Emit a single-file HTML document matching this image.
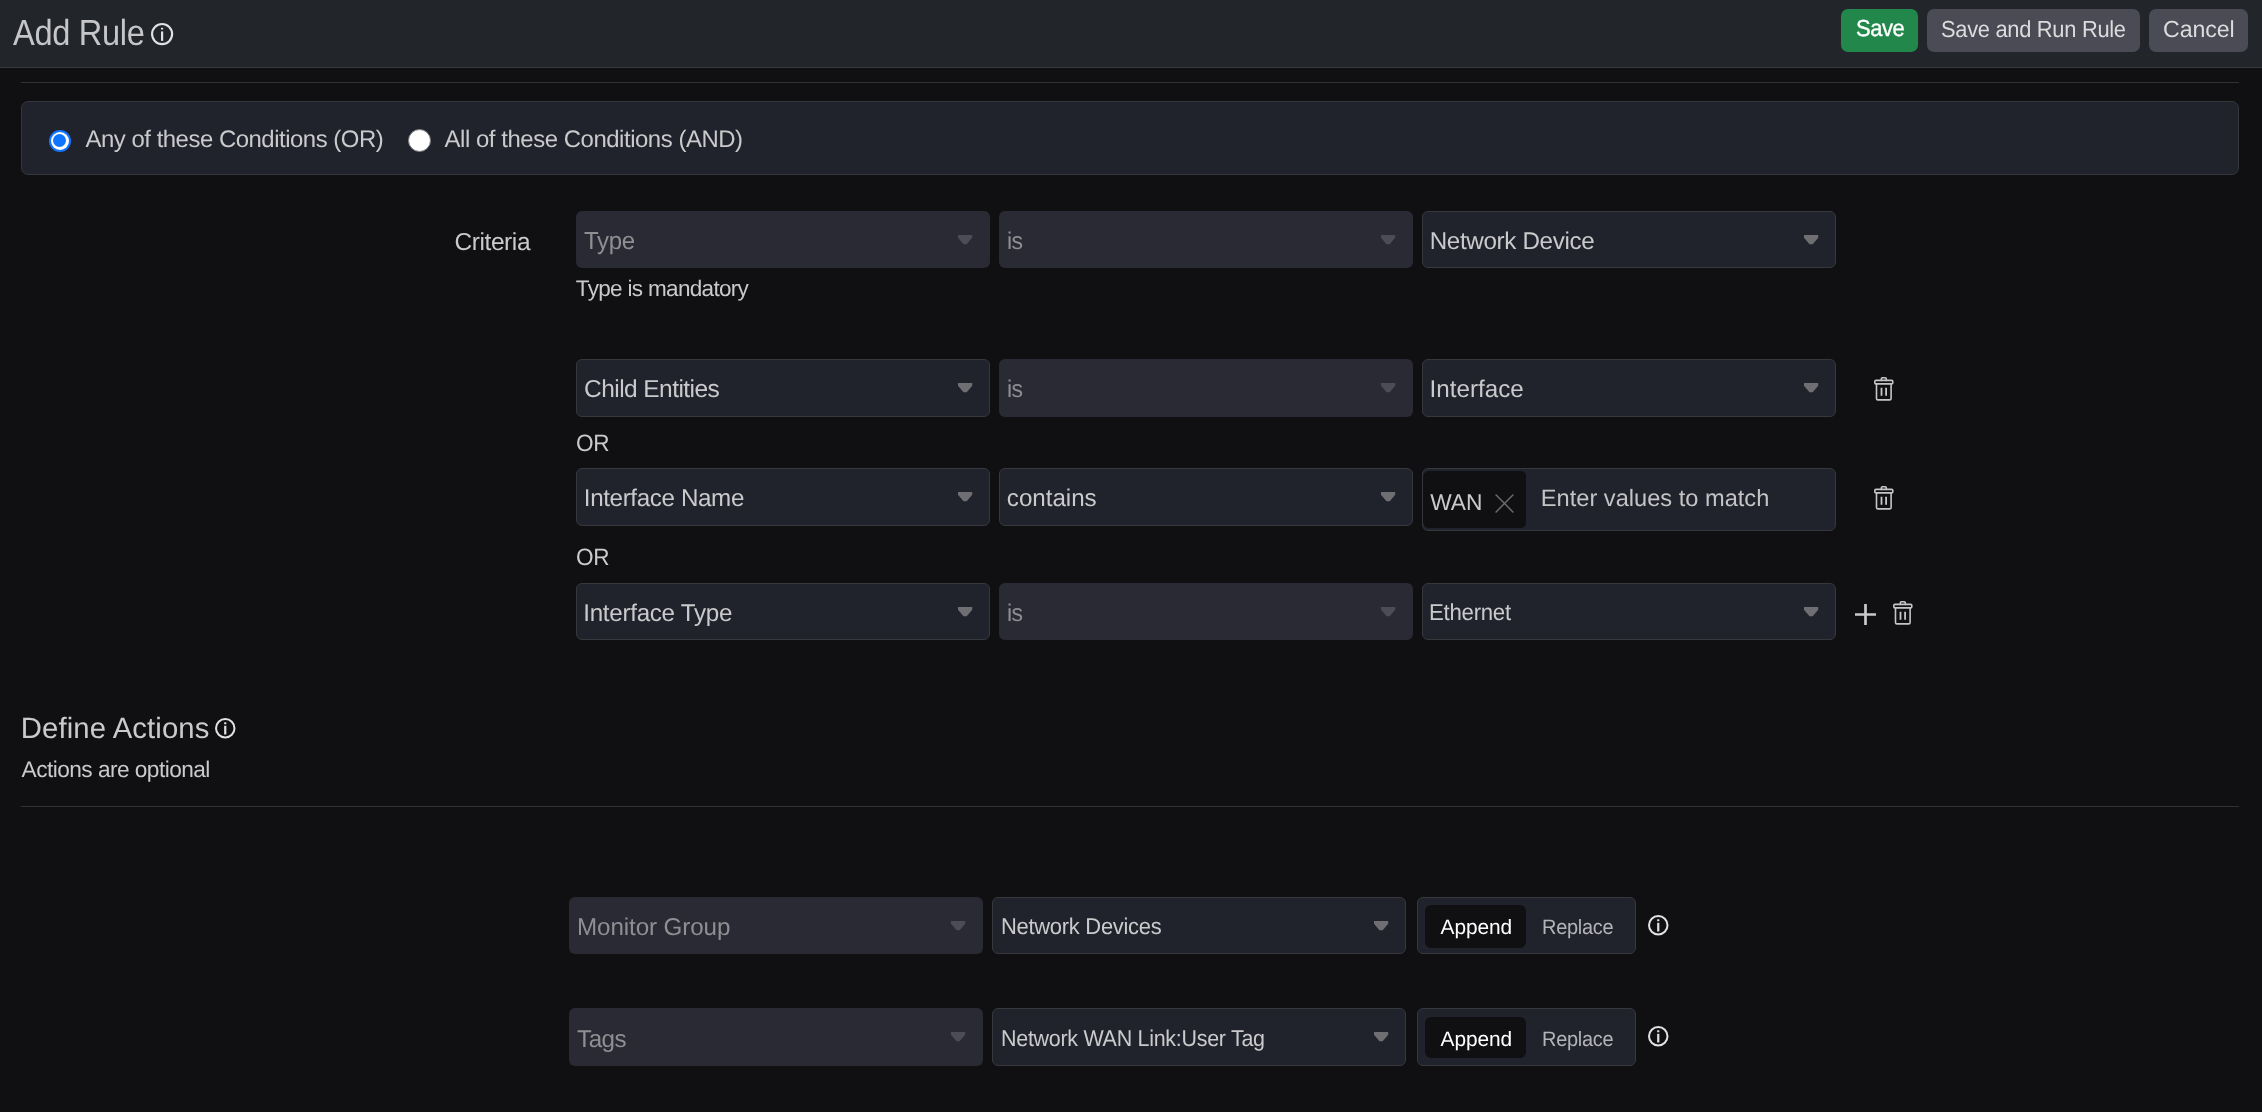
<!DOCTYPE html>
<html lang="en"><head><meta charset="utf-8"><title>Add Rule</title>
<style>
*{box-sizing:border-box;margin:0;padding:0}
html,body{width:2262px;height:1112px;overflow:hidden;background:#101013}
body{position:relative;font-family:"Liberation Sans",Arial,sans-serif;color:#cdcdcf}
.t{position:absolute;white-space:pre}
#txt{position:absolute;left:0;top:0;width:2262px;height:1112px;will-change:transform;text-rendering:geometricPrecision}
.ic{position:absolute;overflow:visible}
#hdr{position:absolute;left:0;top:0;width:2262px;height:68px;background:#22252a;border-bottom:1px solid #35383d}
.btn{position:absolute;top:9px;height:43px;border-radius:7px;background:#4a4b54}
.btn.green{background:#21874b}
.hr{position:absolute;left:21px;width:2218px;height:1px;background:#2f3136}
#cond{position:absolute;left:21px;top:101px;width:2218px;height:74px;background:#21232c;border:1px solid #35363b;border-radius:7px}
.sel{position:absolute;border-radius:6px}
.sel.en{background:#21232c;border:1px solid #37383d}
.sel.dis{background:#292a33}
.radio{position:absolute;border-radius:50%}
.chip{position:absolute;background:#101013;border-radius:5px}
.pill{position:absolute;background:#101013;border-radius:6px}
</style></head><body>

<div id="hdr"></div>
<svg class="ic" style="left:151.00px;top:23.00px" width="22.2" height="22.2" viewBox="0 0 22.2 22.2" fill="none" stroke="#e2e2e4" stroke-width="2.1"><circle cx="11.1" cy="11.1" r="10.05"/><path d="M11.1 8.44V17.87" stroke-width="2.2"/><rect x="10.00" y="4.71" width="2.2" height="1.9" rx="0.5" fill="#e2e2e4" stroke="none"/></svg>
<div class="btn green" style="left:1841px;width:77px"></div>
<div class="btn" style="left:1927px;width:213px"></div>
<div class="btn" style="left:2149px;width:99px"></div>
<div class="hr" style="top:82px"></div>
<div id="cond"></div>
<div class="radio" style="left:48.9px;top:129.5px;width:22px;height:22px;background:#0f75ff"></div>
<div class="radio" style="left:50.9px;top:131.5px;width:18px;height:18px;background:#fff"></div>
<div class="radio" style="left:53.3px;top:133.9px;width:13.2px;height:13.2px;background:#0f75ff"></div>
<div class="radio" style="left:408px;top:128.9px;width:23px;height:23px;background:#fff;border:1.8px solid #77787c"></div>
<div class="sel dis" style="left:576px;top:211px;width:414px;height:57px"></div><svg class="ic" style="left:957.9px;top:235.0px" width="15" height="10" viewBox="0 0 15 10"><path d="M0 0H14.2V2.7L8.7 9.3H5.5L0 2.7z" fill="#4b4c56"/></svg>
<div class="sel dis" style="left:999px;top:211px;width:414px;height:57px"></div><svg class="ic" style="left:1380.9px;top:235.0px" width="15" height="10" viewBox="0 0 15 10"><path d="M0 0H14.2V2.7L8.7 9.3H5.5L0 2.7z" fill="#4b4c56"/></svg>
<div class="sel en" style="left:1422px;top:211px;width:414px;height:57px"></div><svg class="ic" style="left:1803.9px;top:235.0px" width="15" height="10" viewBox="0 0 15 10"><path d="M0 0H14.2V2.7L8.7 9.3H5.5L0 2.7z" fill="#6f6f73"/></svg>
<div class="sel en" style="left:576px;top:359px;width:414px;height:58px"></div><svg class="ic" style="left:957.9px;top:383.0px" width="15" height="10" viewBox="0 0 15 10"><path d="M0 0H14.2V2.7L8.7 9.3H5.5L0 2.7z" fill="#6f6f73"/></svg>
<div class="sel dis" style="left:999px;top:359px;width:414px;height:58px"></div><svg class="ic" style="left:1380.9px;top:383.0px" width="15" height="10" viewBox="0 0 15 10"><path d="M0 0H14.2V2.7L8.7 9.3H5.5L0 2.7z" fill="#4b4c56"/></svg>
<div class="sel en" style="left:1422px;top:359px;width:414px;height:58px"></div><svg class="ic" style="left:1803.9px;top:383.0px" width="15" height="10" viewBox="0 0 15 10"><path d="M0 0H14.2V2.7L8.7 9.3H5.5L0 2.7z" fill="#6f6f73"/></svg>
<div class="sel en" style="left:576px;top:468px;width:414px;height:58px"></div><svg class="ic" style="left:957.9px;top:492.0px" width="15" height="10" viewBox="0 0 15 10"><path d="M0 0H14.2V2.7L8.7 9.3H5.5L0 2.7z" fill="#6f6f73"/></svg>
<div class="sel en" style="left:999px;top:468px;width:414px;height:58px"></div><svg class="ic" style="left:1380.9px;top:492.0px" width="15" height="10" viewBox="0 0 15 10"><path d="M0 0H14.2V2.7L8.7 9.3H5.5L0 2.7z" fill="#6f6f73"/></svg>
<div class="sel en" style="left:576px;top:583px;width:414px;height:57px"></div><svg class="ic" style="left:957.9px;top:607.0px" width="15" height="10" viewBox="0 0 15 10"><path d="M0 0H14.2V2.7L8.7 9.3H5.5L0 2.7z" fill="#6f6f73"/></svg>
<div class="sel dis" style="left:999px;top:583px;width:414px;height:57px"></div><svg class="ic" style="left:1380.9px;top:607.0px" width="15" height="10" viewBox="0 0 15 10"><path d="M0 0H14.2V2.7L8.7 9.3H5.5L0 2.7z" fill="#4b4c56"/></svg>
<div class="sel en" style="left:1422px;top:583px;width:414px;height:57px"></div><svg class="ic" style="left:1803.9px;top:607.0px" width="15" height="10" viewBox="0 0 15 10"><path d="M0 0H14.2V2.7L8.7 9.3H5.5L0 2.7z" fill="#6f6f73"/></svg>
<div class="sel en" style="left:1422px;top:468px;width:414px;height:63px"></div>
<div class="chip" style="left:1423px;top:471px;width:103px;height:57px;border-radius:6px 5px 5px 6px"></div>
<svg class="ic" style="left:1495px;top:493.5px" width="19" height="19" viewBox="0 0 19 19" stroke="#6c6d72" stroke-width="1.4" fill="none"><path d="M0.6 0.6L18.4 18.4M18.4 0.6L0.6 18.4"/></svg>
<svg class="ic" style="left:1874.1px;top:377px" width="20" height="24" viewBox="0 0 20 24" fill="none" stroke="#c6c6c8" stroke-width="1.6" stroke-linejoin="round" stroke-linecap="round"><path d="M7.3 3.4V1.9a1.1 1.1 0 0 1 1.1-1.1h2.8a1.1 1.1 0 0 1 1.1 1.1v1.5"/><rect x="0.8" y="3.4" width="18" height="3.5" rx="1.2"/><path d="M2.5 6.9v14.6a1.4 1.4 0 0 0 1.4 1.4h11.8a1.4 1.4 0 0 0 1.4-1.4V6.9"/><path d="M7.5 10.8v8M12.1 10.8v8" stroke-width="1.8" stroke-linecap="butt"/></svg>
<svg class="ic" style="left:1874.1px;top:486px" width="20" height="24" viewBox="0 0 20 24" fill="none" stroke="#c6c6c8" stroke-width="1.6" stroke-linejoin="round" stroke-linecap="round"><path d="M7.3 3.4V1.9a1.1 1.1 0 0 1 1.1-1.1h2.8a1.1 1.1 0 0 1 1.1 1.1v1.5"/><rect x="0.8" y="3.4" width="18" height="3.5" rx="1.2"/><path d="M2.5 6.9v14.6a1.4 1.4 0 0 0 1.4 1.4h11.8a1.4 1.4 0 0 0 1.4-1.4V6.9"/><path d="M7.5 10.8v8M12.1 10.8v8" stroke-width="1.8" stroke-linecap="butt"/></svg>
<svg class="ic" style="left:1892.5px;top:601px" width="20" height="24" viewBox="0 0 20 24" fill="none" stroke="#c6c6c8" stroke-width="1.6" stroke-linejoin="round" stroke-linecap="round"><path d="M7.3 3.4V1.9a1.1 1.1 0 0 1 1.1-1.1h2.8a1.1 1.1 0 0 1 1.1 1.1v1.5"/><rect x="0.8" y="3.4" width="18" height="3.5" rx="1.2"/><path d="M2.5 6.9v14.6a1.4 1.4 0 0 0 1.4 1.4h11.8a1.4 1.4 0 0 0 1.4-1.4V6.9"/><path d="M7.5 10.8v8M12.1 10.8v8" stroke-width="1.8" stroke-linecap="butt"/></svg>
<svg class="ic" style="left:1855px;top:604px" width="21" height="21" viewBox="0 0 21 21" stroke="#c9c9cb" stroke-width="2.7" fill="none"><path d="M10.5 0V21M0 10.5H21"/></svg>
<svg class="ic" style="left:215.15px;top:717.95px" width="20.5" height="20.5" viewBox="0 0 20.5 20.5" fill="none" stroke="#e2e2e4" stroke-width="2.0"><circle cx="10.25" cy="10.25" r="9.25"/><path d="M10.25 7.79V16.50" stroke-width="2.2"/><rect x="9.15" y="4.28" width="2.2" height="1.9" rx="0.5" fill="#e2e2e4" stroke="none"/></svg>
<div class="hr" style="top:806px"></div>
<div class="sel dis" style="left:569px;top:897px;width:414px;height:57px"></div><svg class="ic" style="left:950.9px;top:921.0px" width="15" height="10" viewBox="0 0 15 10"><path d="M0 0H14.2V2.7L8.7 9.3H5.5L0 2.7z" fill="#4b4c56"/></svg>
<div class="sel en" style="left:992px;top:897px;width:414px;height:57px"></div><svg class="ic" style="left:1373.9px;top:921.0px" width="15" height="10" viewBox="0 0 15 10"><path d="M0 0H14.2V2.7L8.7 9.3H5.5L0 2.7z" fill="#6f6f73"/></svg>
<div class="sel en" style="left:1417px;top:897px;width:219px;height:57px"></div>
<div class="pill" style="left:1425px;top:905px;width:101.3px;height:42.5px"></div>
<svg class="ic" style="left:1648.05px;top:914.50px" width="20.5" height="20.5" viewBox="0 0 20.5 20.5" fill="none" stroke="#e2e2e4" stroke-width="2.0"><circle cx="10.25" cy="10.25" r="9.25"/><path d="M10.25 7.79V16.50" stroke-width="2.2"/><rect x="9.15" y="4.28" width="2.2" height="1.9" rx="0.5" fill="#e2e2e4" stroke="none"/></svg>
<div class="sel dis" style="left:569px;top:1008px;width:414px;height:58px"></div><svg class="ic" style="left:950.9px;top:1032.0px" width="15" height="10" viewBox="0 0 15 10"><path d="M0 0H14.2V2.7L8.7 9.3H5.5L0 2.7z" fill="#4b4c56"/></svg>
<div class="sel en" style="left:992px;top:1008px;width:414px;height:58px"></div><svg class="ic" style="left:1373.9px;top:1032.0px" width="15" height="10" viewBox="0 0 15 10"><path d="M0 0H14.2V2.7L8.7 9.3H5.5L0 2.7z" fill="#6f6f73"/></svg>
<div class="sel en" style="left:1417px;top:1008px;width:219px;height:58px"></div>
<div class="pill" style="left:1425px;top:1017px;width:101.3px;height:41px"></div>
<svg class="ic" style="left:1648.05px;top:1025.50px" width="20.5" height="20.5" viewBox="0 0 20.5 20.5" fill="none" stroke="#e2e2e4" stroke-width="2.0"><circle cx="10.25" cy="10.25" r="9.25"/><path d="M10.25 7.79V16.50" stroke-width="2.2"/><rect x="9.15" y="4.28" width="2.2" height="1.9" rx="0.5" fill="#e2e2e4" stroke="none"/></svg>
<div id="txt">
<span class="t" style="left:12.66px;top:11px;font-size:36.34px;line-height:44px;letter-spacing:-0.346px;color:#c6c6c8;transform-origin:0 0;transform:scaleX(0.8967);">Add Rule</span>
<span class="t" style="left:1855.64px;top:14px;font-size:23.11px;line-height:28px;letter-spacing:-0.5px;color:#ffffff;-webkit-text-stroke:0.35px #fff;transform-origin:0 0;transform:scaleX(0.9502);">Save</span>
<span class="t" style="left:1941.17px;top:15px;font-size:23.18px;line-height:28px;letter-spacing:-0.318px;color:#dcdcde;transform-origin:0 0;transform:scaleX(0.9445);">Save and Run Rule</span>
<span class="t" style="left:2163.06px;top:15px;font-size:23.18px;line-height:28px;letter-spacing:-0.087px;color:#dcdcde;">Cancel</span>
<span class="t" style="left:85.53px;top:125px;font-size:23.91px;line-height:29px;letter-spacing:-0.472px;color:#cacacc;">Any of these Conditions (OR)</span>
<span class="t" style="left:444.6px;top:125px;font-size:23.91px;line-height:29px;letter-spacing:-0.446px;color:#cacacc;">All of these Conditions (AND)</span>
<span class="t" style="left:454.45px;top:228px;font-size:24.49px;line-height:29px;letter-spacing:-0.404px;color:#cacacc;">Criteria</span>
<span class="t" style="left:584.02px;top:227px;font-size:24.71px;line-height:30px;letter-spacing:-0.334px;color:#8f8f93;transform-origin:0 0;transform:scaleX(0.9714);">Type</span>
<span class="t" style="left:1006.91px;top:227px;font-size:24.2px;line-height:29px;letter-spacing:-0.585px;color:#8f8f93;transform-origin:0 0;transform:scaleX(0.9529);">is</span>
<span class="t" style="left:1429.68px;top:227px;font-size:24.2px;line-height:29px;letter-spacing:-0.334px;color:#cacacc;">Network Device</span>
<span class="t" style="left:575.87px;top:275px;font-size:22.53px;line-height:27px;letter-spacing:-0.684px;color:#cacacc;">Type is mandatory</span>
<span class="t" style="left:584.1px;top:375px;font-size:24.49px;line-height:29px;letter-spacing:-0.558px;color:#cacacc;">Child Entities</span>
<span class="t" style="left:1006.91px;top:375px;font-size:24.2px;line-height:29px;letter-spacing:-0.585px;color:#8f8f93;transform-origin:0 0;transform:scaleX(0.9529);">is</span>
<span class="t" style="left:1429.48px;top:375px;font-size:24.2px;line-height:29px;letter-spacing:0.024px;color:#cacacc;">Interface</span>
<span class="t" style="left:575.92px;top:430px;font-size:23.62px;line-height:28px;letter-spacing:-0.208px;color:#cacacc;transform-origin:0 0;transform:scaleX(0.956);">OR</span>
<span class="t" style="left:583.8px;top:484px;font-size:24.2px;line-height:29px;letter-spacing:-0.369px;color:#cacacc;">Interface Name</span>
<span class="t" style="left:1006.86px;top:484px;font-size:24.2px;line-height:29px;letter-spacing:-0.042px;color:#cacacc;">contains</span>
<span class="t" style="left:1430.19px;top:489px;font-size:22.75px;line-height:27px;letter-spacing:0.047px;color:#cacacc;">WAN</span>
<span class="t" style="left:1540.82px;top:485px;font-size:23.62px;line-height:28px;letter-spacing:0.008px;color:#c4c4c6;">Enter values to match</span>
<span class="t" style="left:575.92px;top:544px;font-size:23.62px;line-height:28px;letter-spacing:-0.208px;color:#cacacc;transform-origin:0 0;transform:scaleX(0.956);">OR</span>
<span class="t" style="left:583.19px;top:599px;font-size:24.2px;line-height:29px;letter-spacing:-0.28px;color:#cacacc;">Interface Type</span>
<span class="t" style="left:1006.91px;top:599px;font-size:24.2px;line-height:29px;letter-spacing:-0.585px;color:#8f8f93;transform-origin:0 0;transform:scaleX(0.9529);">is</span>
<span class="t" style="left:1429.32px;top:598px;font-size:23.04px;line-height:28px;letter-spacing:-0.282px;color:#cacacc;transform-origin:0 0;transform:scaleX(0.9653);">Ethernet</span>
<span class="t" style="left:20.76px;top:711px;font-size:29.29px;line-height:35px;letter-spacing:0.11px;color:#cacacc;">Define Actions</span>
<span class="t" style="left:21.61px;top:756px;font-size:22.67px;line-height:27px;letter-spacing:-0.54px;color:#cacacc;">Actions are optional</span>
<span class="t" style="left:577.0px;top:913px;font-size:24.2px;line-height:29px;letter-spacing:-0.1px;color:#8f8f93;">Monitor Group</span>
<span class="t" style="left:577.12px;top:1025px;font-size:24.2px;line-height:29px;letter-spacing:-0.576px;color:#8f8f93;">Tags</span>
<span class="t" style="left:1000.62px;top:913px;font-size:22.75px;line-height:27px;letter-spacing:-0.289px;color:#cacacc;transform-origin:0 0;transform:scaleX(0.9642);">Network Devices</span>
<span class="t" style="left:1000.62px;top:1025px;font-size:22.75px;line-height:27px;letter-spacing:-0.291px;color:#cacacc;transform-origin:0 0;transform:scaleX(0.943);">Network WAN Link:User Tag</span>
<span class="t" style="left:1440.53px;top:915px;font-size:20.86px;line-height:25px;letter-spacing:-0.044px;color:#ffffff;">Append</span>
<span class="t" style="left:1541.9px;top:915px;font-size:20.86px;line-height:25px;letter-spacing:-0.281px;color:#b4b4b8;transform-origin:0 0;transform:scaleX(0.9565);">Replace</span>
<span class="t" style="left:1440.53px;top:1027px;font-size:20.86px;line-height:25px;letter-spacing:-0.044px;color:#ffffff;">Append</span>
<span class="t" style="left:1541.9px;top:1027px;font-size:20.86px;line-height:25px;letter-spacing:-0.281px;color:#b4b4b8;transform-origin:0 0;transform:scaleX(0.9565);">Replace</span>
</div>
</body></html>
